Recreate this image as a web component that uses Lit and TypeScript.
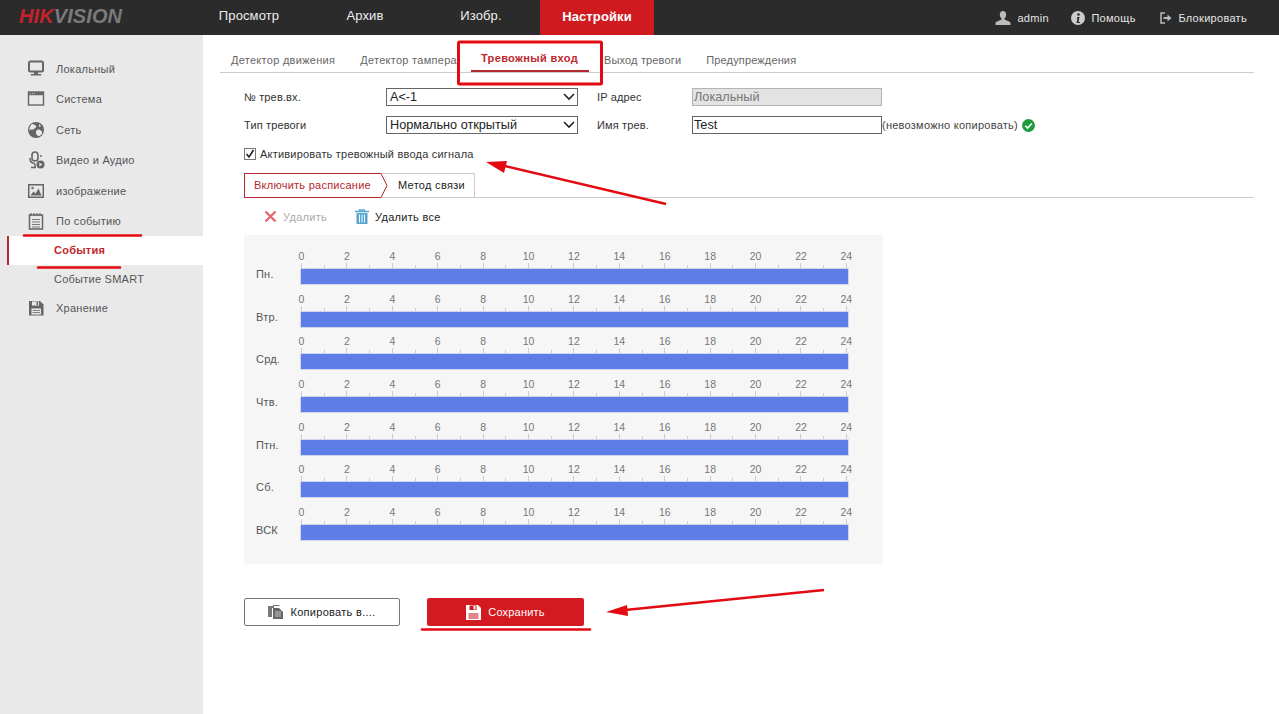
import { LitElement, html, css, svg } from "lit";
import { customElement } from "lit/decorators.js";

const ICONS: Record<string, unknown> = {
  monitor: svg`<rect x="2" y="1.5" width="14" height="10" rx="1.5" fill="none" stroke="#666" stroke-width="2"/><rect x="7" y="11" width="4" height="3" fill="#666"/><rect x="3.5" y="14" width="11" height="1.6" rx=".8" fill="#666"/>`,
  window: svg`<rect x="1.5" y="2" width="15" height="13" fill="none" stroke="#666" stroke-width="1.4"/><rect x="1.5" y="2" width="15" height="3.2" fill="#666"/><path d="M3 3.6h1M5 3.6h1M7 3.6h1" stroke="#e9e9e9" stroke-width=".8"/>`,
  globe: svg`<circle cx="9" cy="9" r="8" fill="#666"/><path d="M5 3c2 0 3 1 4 2s-1 2-2 3-3 0-4 1-1-3 2-6zM10 9c2-1 4 0 5 2s-3 5-4 4-2-2-2-3 0-2 1-3zM12 3l2 2-2 1z" fill="#e9e9e9"/>`,
  video: svg`<rect x="5" y="1" width="6" height="9" rx="3" fill="none" stroke="#666" stroke-width="1.6"/><path d="M3 7c0 4 2 5.500 5 5.500M8 13v3M4 16.500h5" fill="none" stroke="#666" stroke-width="1.5"/><circle cx="13.500" cy="13.500" r="4" fill="#666"/><path d="M12.300 11.500l3 2-3 2z" fill="#e9e9e9"/><circle cx="14" cy="5" r="1" fill="#666"/>`,
  image: svg`<rect x="1" y="2" width="16" height="14" fill="#666"/><rect x="2.500" y="3.500" width="13" height="11" fill="#e9e9e9"/><path d="M3.500 13.500l3-4 2 2 3-5 3 7z" fill="#666"/><circle cx="5.500" cy="6" r="1.200" fill="#666"/>`,
  event: svg`<rect x="2.500" y="3" width="13" height="14" fill="none" stroke="#666" stroke-width="1.500"/><path d="M4 1v3M7 1v3M10 1v3M13 1v3" stroke="#666" stroke-width="1.200"/><path d="M5 7.500h8M5 10h8M5 12.500h8M5 15h8" stroke="#777" stroke-width="1.200"/>`,
  disk: svg`<path d="M2 2h11l3.500 3.500V16.500H2z" fill="#666"/><rect x="5" y="2.500" width="7" height="4" fill="#e9e9e9"/><rect x="9.500" y="3" width="1.500" height="3" fill="#666"/><rect x="4.500" y="9.500" width="9.500" height="6" fill="#e9e9e9"/><path d="M5.500 11.500h7.500M5.500 13.500h7.500" stroke="#666" stroke-width=".8"/>`,
};

const nav = ["Просмотр", "Архив", "Изобр.", "Настройки"];
const days = ["Пн.", "Втр.", "Срд.", "Чтв.", "Птн.", "Сб.", "ВСК"];
const hours = Array.from({ length: 13 }, (_, i) => i * 2);
const ticks = Array.from({ length: 25 }, (_, i) => i);
const tabs = ["Детектор движения", "Детектор тампера", "Тревожный вход", "Выход тревоги", "Предупреждения"];

@customElement("app-root")
export class AppRoot extends LitElement {
  static styles = css`
    :host {
      display: block;
      position: relative;
      height: 714px;
      overflow: hidden;
      background: #fff;
      font-family: "Liberation Sans", Arial, sans-serif;
      font-size: 11px;
      color: #333;
    }
    header {
      height: 35px;
      background: #2b2b2b;
      display: flex;
      align-items: stretch;
    }
    .logo {
      width: 192px;
      box-sizing: border-box;
      padding: 5px 0 0 19px;
      font-size: 20px;
      line-height: 22px;
      font-weight: 700;
      font-style: italic;
      letter-spacing: 0.1px;
      color: #7a7a7a;
      white-space: nowrap;
    }
    .logo b { color: #c4222c; }
    .nav { display: flex; gap: 2px; }
    .nav div {
      width: 114px;
      text-align: center;
      line-height: 32px;
      font-size: 13px;
      letter-spacing: 0.12px;
      color: #eee;
    }
    .nav .on { background: #cf1a20; color: #fff; font-weight: 700; line-height: 33px; }
    .user {
      margin-left: auto;
      display: flex;
      align-items: center;
      padding: 0 32px 0 0;
      color: #e4e4e4;
      font-size: 11px;
      letter-spacing: 0.3px;
    }
    .user span { display: flex; align-items: center; gap: 6px; }
    .user svg { display: block; }
    .main { display: flex; height: 679px; }
    aside {
      width: 203px;
      flex: none;
      box-sizing: border-box;
      background: #e9e9e9;
      padding-top: 18.800px;
      color: #555;
    }
    .item {
      height: 30.400px;
      display: flex;
      align-items: center;
      padding-left: 27px;
      gap: 11px;
      letter-spacing: 0.25px;
    }
    .item svg { flex: none; width: 18px; height: 18px; }
    .sub {
      height: 28px;
      display: flex;
      align-items: center;
      padding-left: 47px;
      margin-left: 7px;
      letter-spacing: 0.25px;
    }
    .sub.on {
      height: 29px;
      box-sizing: border-box;
      padding-bottom: 2px;
      background: #fff;
      border-left: 2px solid #b5282f;
      padding-left: 45px;
      color: #c1272d;
      font-weight: 700;
    }
    .content { flex: 1; min-width: 0; padding: 0 25px 0 17px; }
    .tabs {
      display: flex;
      height: 37px;
      border-bottom: 1px solid #ccc;
      color: #666;
      letter-spacing: 0.28px;
    }
    .tabs div { padding: 19px 0 0 11px; margin-right: 14px; white-space: nowrap; }
    .tabs div:nth-child(n + 4) { letter-spacing: 0.15px; }
    .tabs div.on {
      color: #c1272d;
      font-weight: 700;
      letter-spacing: 0.35px;
      position: relative;
      padding: 17px 0 0 10px;
      margin-right: 15px;
    }
    .tabs div.on::after {
      content: "";
      position: absolute;
      left: 0;
      right: -11px;
      bottom: 0;
      height: 2px;
      background: #b5282f;
    }
    .form {
      padding: 15px 0 0 24px;
      display: grid;
      grid-template-columns: 142px 192px 19px 95px 190px auto;
      grid-auto-rows: 18px;
      row-gap: 10px;
      align-items: center;
      color: #333;
      letter-spacing: 0.15px;
    }
    .box {
      box-sizing: border-box;
      height: 18px;
      border: 1px solid #666;
      background: #fff;
      font-size: 12.700px;
      letter-spacing: 0;
      line-height: 16px;
      padding-left: 3px;
      color: #222;
      display: flex;
      align-items: center;
      justify-content: space-between;
    }
    .box svg { margin-right: 2px; }
    .box.plain { padding-left: 1px; }
    .box.dis { background: #e3e3e3; border-color: #b4b4b4; color: #777; }
    .lbl { grid-column: 4; }
    .ok { display: flex; align-items: center; gap: 4px; white-space: nowrap; color: #444; letter-spacing: 0.25px; }
    .check {
      margin: 13px 0 0 24px;
      display: flex;
      align-items: center;
      gap: 4px;
      height: 14px;
      letter-spacing: 0.21px;
    }
    .check i {
      box-sizing: border-box;
      width: 12px;
      height: 12px;
      border: 1px solid #777;
      background: #fff;
      display: block;
    }
    .check svg { display: block; }
    .steps {
      margin: 12px 0 0 24px;
      height: 24px;
      border-bottom: 1px solid #ccc;
      display: flex;
      color: #222;
    }
    .step1 {
      position: relative;
      box-sizing: border-box;
      width: 137px;
      height: 25px;
      line-height: 23px;
      padding-left: 9px;
      color: #b5282f;
      border: 1px solid #b5282f;
      border-right: 0;
      letter-spacing: 0.25px;
    }
    .step1 svg { position: absolute; right: -7px; top: -1px; }
    .step2 {
      box-sizing: border-box;
      width: 94px;
      height: 24px;
      line-height: 23px;
      padding-left: 17px;
      border: 1px solid #ccc;
      border-bottom: 0;
      border-left: 0;
      letter-spacing: 0.3px;
    }
    .tools {
      margin-left: 24px;
      height: 37px;
      display: flex;
      align-items: center;
      padding-left: 20px;
      box-sizing: border-box;
      color: #222;
    }
    .tools span { display: flex; align-items: center; gap: 6px; letter-spacing: 0.3px; }
    .tools .off { color: #aaa; width: 91px; }
    .panel {
      margin-left: 24px;
      width: 639px;
      height: 329px;
      box-sizing: border-box;
      padding-top: 15px;
      background: #f6f6f6;
    }
    .row {
      display: flex;
      height: 42.670px;
      box-sizing: border-box;
      padding-left: 12px;
    }
    .day { width: 44px; padding-top: 17px; color: #555; line-height: 14px; letter-spacing: 0.2px; }
    .track { width: 549px; }
    .nums {
      height: 12px;
      display: flex;
      justify-content: space-between;
      color: #777;
      font-size: 10.500px;
      line-height: 12px;
      padding: 0 2px 0 1px;
    }
    .nums span { width: 1px; display: flex; justify-content: center; }
    .ticks {
      height: 6px;
      display: flex;
      justify-content: space-between;
      align-items: flex-end;
      padding: 0 2px 0 1px;
    }
    .ticks i { display: block; width: 1px; height: 3px; background: #ccc; }
    .ticks i.big { height: 5px; }
    .bar {
      box-sizing: border-box;
      height: 17px;
      background: #5f7de6;
      border: 1px solid #cfd6ee;
    }
    .actions { margin: 34px 0 0 24px; display: flex; gap: 27px; }
    .btn {
      box-sizing: border-box;
      height: 28px;
      width: 156px;
      border: 1px solid #777;
      border-radius: 2px;
      display: flex;
      align-items: center;
      justify-content: center;
      gap: 6px;
      color: #222;
      letter-spacing: 0.3px;
    }
    .btn.save { width: 157px; background: #d41a21; border: 0; color: #fff; gap: 7px; letter-spacing: 0.2px; }
    .marks { position: absolute; left: 0; top: 0; pointer-events: none; }
  `;

  private icon(name: string) {
    return html`<svg viewBox="0 0 18 18">${ICONS[name]}</svg>`;
  }

  render() {
    return html`
      <header>
        <div class="logo"><b>HIK</b>VISION</div>
        <div class="nav">${nav.map((n, i) => html`<div class=${i === 3 ? "on" : ""}>${n}</div>`)}</div>
        <div class="user">
          <span style="width:76px">
            <svg width="16" height="14" viewBox="0 0 16 14"><path d="M8 0c2 0 3.200 1.500 3.200 3.600 0 1.700-.8 3.200-1.700 3.900v1l5 2.200c.8.400 1 1 1 1.800V14H.5v-1.500c0-.8.2-1.400 1-1.800l5-2.200v-1C5.600 6.800 4.800 5.300 4.800 3.600 4.800 1.500 6 0 8 0z" fill="#bbb"/></svg>
            admin
          </span>
          <span style="width:89px">
            <svg width="14" height="14" viewBox="0 0 14 14"><circle cx="7" cy="7" r="7" fill="#ccc"/><circle cx="7.500" cy="3.500" r="1.300" fill="#2b2b2b"/><path d="M6 6h2.500l-1 5H9v1H5.500l1-5H6z" fill="#2b2b2b"/></svg>
            Помощь
          </span>
          <span>
            <svg width="12" height="12" viewBox="0 0 12 12"><path d="M5 1H1v10h4" fill="none" stroke="#bbb" stroke-width="1.500"/><path d="M3.500 5h4V2.500L11.500 6l-4 3.500V7h-4z" fill="#bbb"/></svg>
            Блокировать
          </span>
        </div>
      </header>
      <div class="main">
        <aside>
          <div class="item">${this.icon("monitor")}Локальный</div>
          <div class="item">${this.icon("window")}Система</div>
          <div class="item">${this.icon("globe")}Сеть</div>
          <div class="item">${this.icon("video")}Видео и Аудио</div>
          <div class="item">${this.icon("image")}изображение</div>
          <div class="item">${this.icon("event")}По событию</div>
          <div class="sub on">События</div>
          <div class="sub">Событие SMART</div>
          <div class="item">${this.icon("disk")}Хранение</div>
        </aside>
        <section class="content">
          <div class="tabs">${tabs.map((t, i) => html`<div class=${i === 2 ? "on" : ""}>${t}</div>`)}</div>
          <div class="form">
            <div>№ трев.вх.</div>
            <div class="box">A&lt;-1${this.chevron()}</div>
            <div></div>
            <div class="lbl">IP адрес</div>
            <div class="box dis plain">Локальный</div>
            <div></div>
            <div>Тип тревоги</div>
            <div class="box">Нормально открытый${this.chevron()}</div>
            <div></div>
            <div class="lbl">Имя трев.</div>
            <div class="box plain">Test</div>
            <div class="ok">(невозможно копировать)
              <svg width="13" height="13" viewBox="0 0 13 13"><circle cx="6.500" cy="6.500" r="6.500" fill="#1f9d3c"/><path d="M3.300 6.700l2.300 2.300 4.200-4.500" fill="none" stroke="#fff" stroke-width="1.600"/></svg>
            </div>
          </div>
          <div class="check">
            <i><svg width="10" height="10" viewBox="0 0 10 10"><path d="M1.500 5l2.500 3 4.500-7" fill="none" stroke="#222" stroke-width="1.600"/></svg></i>
            Активировать тревожный ввода сигнала
          </div>
          <div class="steps">
            <div class="step1">Включить расписание
              <svg width="8" height="25" viewBox="0 0 8 25"><path d="M0 0h1l6 12.500L1 25H0z" fill="#fff"/><path d="M0 .5h1l6 12-6 12H0" fill="none" stroke="#b5282f"/></svg>
            </div>
            <div class="step2">Метод связи</div>
          </div>
          <div class="tools">
            <span class="off"><svg width="13" height="13" viewBox="0 0 13 13"><path d="M1.500 1.500l10 10M11.500 1.500l-10 10" stroke="#e46a70" stroke-width="2.400"/></svg>Удалить</span>
            <span><svg width="14" height="15" viewBox="0 0 14 15"><path d="M0 2.500h14M4.500 2V.8h5V2" fill="none" stroke="#5aa5d0" stroke-width="1.300"/><path d="M1.500 4h11v11h-11z" fill="#5aa5d0"/><path d="M4.500 5.500v8M7 5.500v8M9.500 5.500v8" stroke="#fff" stroke-width="1"/></svg>Удалить все</span>
          </div>
          <div class="panel">
            ${days.map(
              (d) => html`<div class="row">
                <div class="day">${d}</div>
                <div class="track">
                  <div class="nums">${hours.map((h) => html`<span>${h}</span>`)}</div>
                  <div class="ticks">${ticks.map((t) => html`<i class=${t % 2 === 0 ? "big" : ""}></i>`)}</div>
                  <div class="bar"></div>
                </div>
              </div>`
            )}
          </div>
          <div class="actions">
            <div class="btn">
              <svg width="16" height="14" viewBox="0 0 16 14"><path d="M0 1h6v2H4v9H0z" fill="#777"/><path d="M5 0h6l1 1H5z" fill="#777"/><path d="M5 3h6l4 4v7H5z" fill="#666"/><path d="M7 7h6M7 9h6M7 11h6" stroke="#ddd" stroke-width=".8"/></svg>
              Копировать в....
            </div>
            <div class="btn save">
              <svg width="15" height="15" viewBox="0 0 15 15"><path d="M0 0h12l3 3v12H0z" fill="#fff"/><rect x="3.500" y="0.500" width="7" height="4.500" fill="#d41a21"/><rect x="7.500" y="1" width="2" height="3.500" fill="#fff"/><rect x="2.500" y="8" width="10" height="6" fill="#e3868a"/></svg>
              Сохранить
            </div>
          </div>
        </section>
      </div>
      <svg class="marks" width="1279" height="714" viewBox="0 0 1279 714">
        <rect x="458.500" y="42" width="143" height="42" rx="1" fill="none" stroke="#e30a12" stroke-width="3"/>
        <path d="M24 235.500h117M38 267.500h82M422 629.500h168" stroke="#e30a12" stroke-width="2.500" stroke-linecap="round"/>
        <path d="M666 204L505 166" stroke="#e30a12" stroke-width="2.500"/>
        <path d="M486 162l21 -1-3 12z" fill="#e30a12"/>
        <path d="M824 590L625 610" stroke="#e30a12" stroke-width="2.500"/>
        <path d="M606 612l21 -7 1 11z" fill="#e30a12"/>
      </svg>
    `;
  }

  private chevron() {
    return html`<svg width="12" height="8" viewBox="0 0 12 8"><path d="M1 1l5 5 5-5" fill="none" stroke="#222" stroke-width="1.600"/></svg>`;
  }
}
